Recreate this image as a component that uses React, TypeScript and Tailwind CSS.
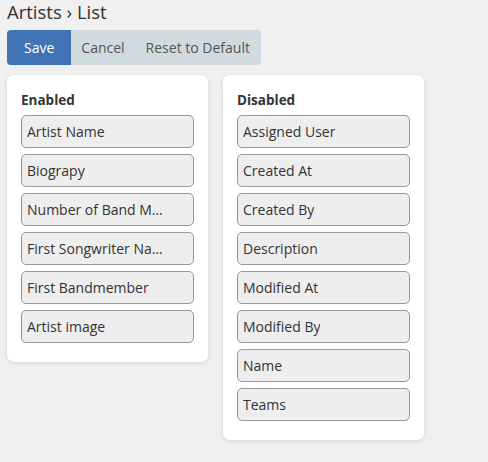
import React from "react";

const enabled = [
  "Artist Name",
  "Biograpy",
  "Number of Band Members",
  "First Songwriter Name",
  "First Bandmember",
  "Artist image",
];

const disabled = [
  "Assigned User",
  "Created At",
  "Created By",
  "Description",
  "Modified At",
  "Modified By",
  "Name",
  "Teams",
];

function FieldList({ title, items }: { title: string; items: string[] }) {
  return (
    <div className="w-[201px] bg-white rounded-[7px] shadow-[0_1px_4px_rgba(0,0,0,0.12)] pl-[14px] pr-[14px] pt-[15px] pb-[19px]">
      <div className="text-[13.5px] font-bold text-[#333] leading-[20px] mb-[5px]">
        {title}
      </div>
      <div className="flex flex-col gap-[6px]">
        {items.map((item) => (
          <div
            key={item}
            className="h-[33px] flex items-center pl-[5px] pr-[28px] bg-[#eeeeee] border border-[#999] rounded-[5px] text-[14px] text-[#333] whitespace-nowrap overflow-hidden"
          >
            <span className="truncate">{item}</span>
          </div>
        ))}
      </div>
    </div>
  );
}

export default function App() {
  return (
    <div
      className="min-h-[462px] bg-[#f0f0f0] px-[7px] pt-0"
      style={{ fontFamily: '"Open Sans", sans-serif' }}
    >
      {/* Header */}
      <h1 className="text-[18.5px] leading-[24px] text-[#333] font-normal">
        Artists › List
      </h1>

      {/* Actions */}
      <div className="mt-[6px] inline-flex h-[35px] rounded-[4px] overflow-hidden bg-[#d1dbdf]">
        <button className="px-[17px] bg-[#4174b7] text-white text-[14px]">
          Save
        </button>
        <button className="px-[10px] text-[#555] text-[14px]">Cancel</button>
        <button className="pl-[11px] pr-[11px] text-[#555] text-[14px]">
          Reset to Default
        </button>
      </div>

      {/* Lists */}
      <div className="mt-[10px] flex items-start gap-[15px]">
        <FieldList title="Enabled" items={enabled} />
        <FieldList title="Disabled" items={disabled} />
      </div>
    </div>
  );
}
